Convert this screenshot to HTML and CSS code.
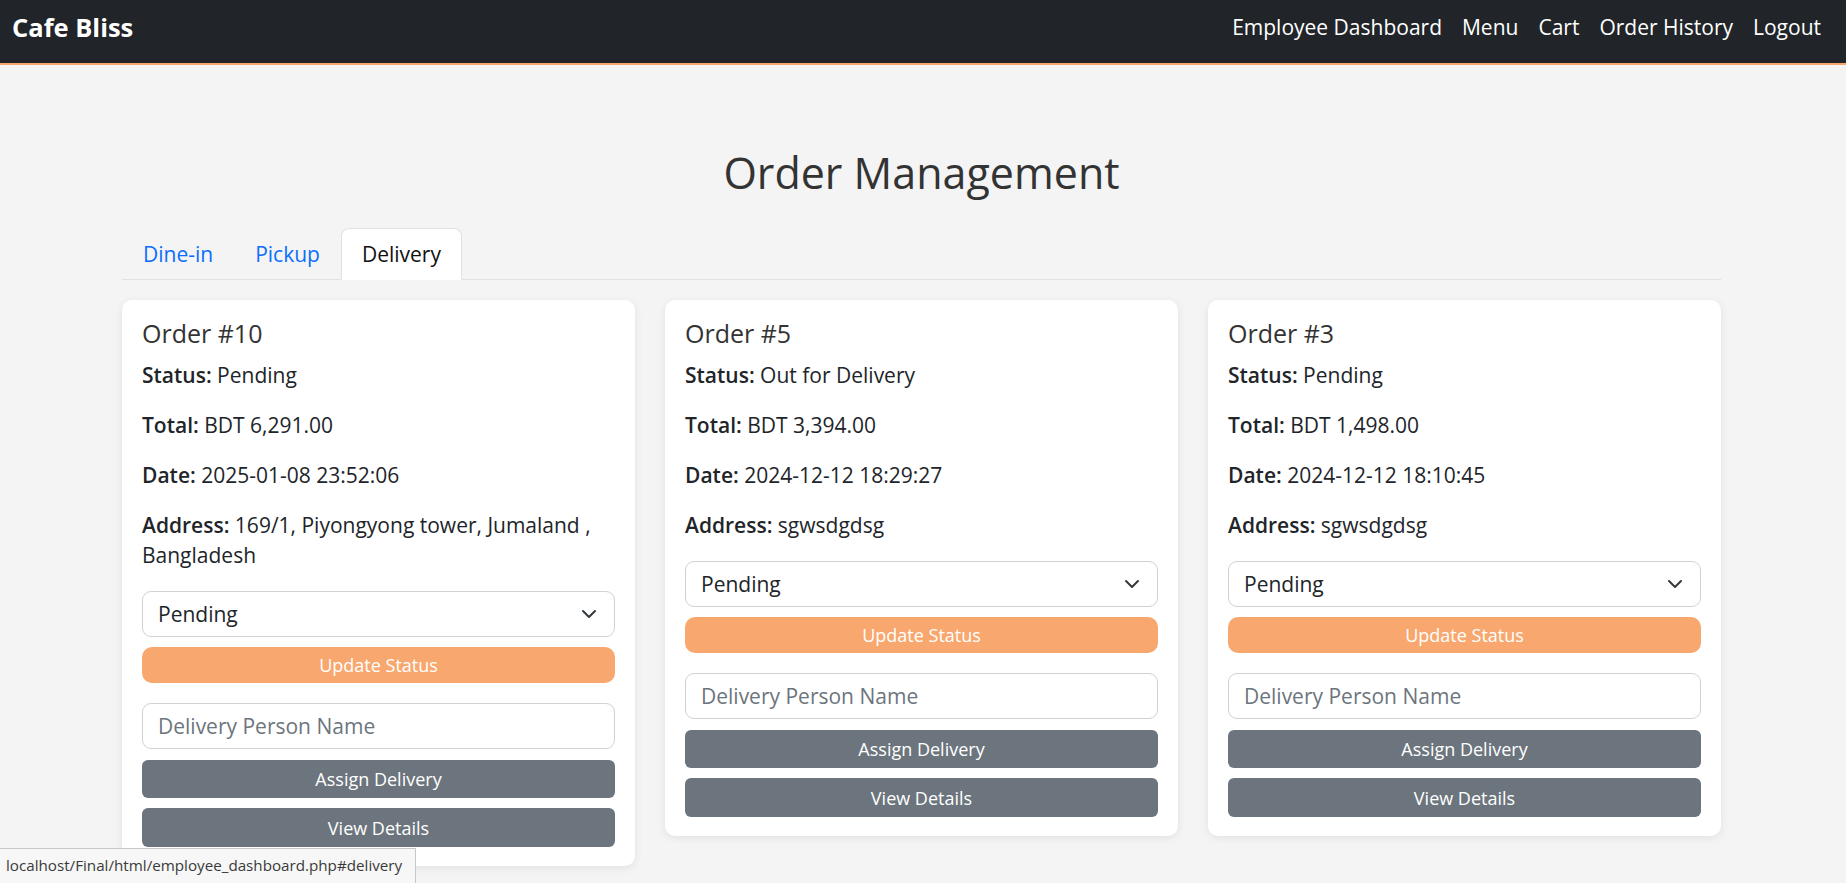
FILE: index.html
```html
<!DOCTYPE html>
<html lang="en">
<head>
<meta charset="utf-8">
<title>Cafe Bliss - Order Management</title>
<link rel="stylesheet" href="styles.css">
</head>
<body>
<nav class="navbar">
  <a class="brand" href="#">Cafe Bliss</a>
  <ul class="nav-links">
    <li><a href="#">Employee Dashboard</a></li>
    <li><a href="#">Menu</a></li>
    <li><a href="#">Cart</a></li>
    <li><a href="#">Order History</a></li>
    <li><a href="#">Logout</a></li>
  </ul>
</nav>

<main class="container">
  <h1 class="page-title">Order Management</h1>
  <ul class="tabs">
    <li><a class="tab" href="#">Dine-in</a></li>
    <li><a class="tab" href="#">Pickup</a></li>
    <li><a class="tab active" href="#">Delivery</a></li>
  </ul>

  <div class="cards">
    <div class="card">
      <h5 class="card-title">Order #10</h5>
      <p><strong>Status:</strong> Pending</p>
      <p><strong>Total:</strong> BDT 6,291.00</p>
      <p><strong>Date:</strong> 2025-01-08 23:52:06</p>
      <p><strong>Address:</strong> 169/1, Piyongyong tower, Jumaland , Bangladesh</p>
      <form class="status-form">
        <div class="select-wrap">
          <select class="select"><option>Pending</option></select>
          <svg class="chevron" viewBox="0 0 16 12" width="16" height="12"><path d="M2 3l6 6 6-6" fill="none" stroke="#343a40" stroke-width="2" stroke-linecap="round" stroke-linejoin="round"/></svg>
        </div>
        <button type="button" class="btn btn-orange">Update Status</button>
      </form>
      <form class="assign-form">
        <input class="input" type="text" placeholder="Delivery Person Name">
        <button type="button" class="btn btn-gray btn-assign">Assign Delivery</button>
        <button type="button" class="btn btn-gray btn-view">View Details</button>
      </form>
    </div>

    <div class="card">
      <h5 class="card-title">Order #5</h5>
      <p><strong>Status:</strong> Out for Delivery</p>
      <p><strong>Total:</strong> BDT 3,394.00</p>
      <p><strong>Date:</strong> 2024-12-12 18:29:27</p>
      <p><strong>Address:</strong> sgwsdgdsg</p>
      <form class="status-form">
        <div class="select-wrap">
          <select class="select"><option>Pending</option></select>
          <svg class="chevron" viewBox="0 0 16 12" width="16" height="12"><path d="M2 3l6 6 6-6" fill="none" stroke="#343a40" stroke-width="2" stroke-linecap="round" stroke-linejoin="round"/></svg>
        </div>
        <button type="button" class="btn btn-orange">Update Status</button>
      </form>
      <form class="assign-form">
        <input class="input" type="text" placeholder="Delivery Person Name">
        <button type="button" class="btn btn-gray btn-assign">Assign Delivery</button>
        <button type="button" class="btn btn-gray btn-view">View Details</button>
      </form>
    </div>

    <div class="card">
      <h5 class="card-title">Order #3</h5>
      <p><strong>Status:</strong> Pending</p>
      <p><strong>Total:</strong> BDT 1,498.00</p>
      <p><strong>Date:</strong> 2024-12-12 18:10:45</p>
      <p><strong>Address:</strong> sgwsdgdsg</p>
      <form class="status-form">
        <div class="select-wrap">
          <select class="select"><option>Pending</option></select>
          <svg class="chevron" viewBox="0 0 16 12" width="16" height="12"><path d="M2 3l6 6 6-6" fill="none" stroke="#343a40" stroke-width="2" stroke-linecap="round" stroke-linejoin="round"/></svg>
        </div>
        <button type="button" class="btn btn-orange">Update Status</button>
      </form>
      <form class="assign-form">
        <input class="input" type="text" placeholder="Delivery Person Name">
        <button type="button" class="btn btn-gray btn-assign">Assign Delivery</button>
        <button type="button" class="btn btn-gray btn-view">View Details</button>
      </form>
    </div>
  </div>
</main>

<div class="statusbar">localhost/Final/html/employee_dashboard.php#delivery</div>
</body>
</html>
```

FILE: styles.css
```css
* { box-sizing: border-box; }

html, body {
  margin: 0;
  padding: 0;
}

body {
  background: #f4f4f4;
  font-family: "Open Sans", "Liberation Sans", sans-serif;
  font-size: 21px;
  line-height: 30px;
  color: #212529;
  min-height: 883px;
}

a { text-decoration: none; }

/* Navbar */
.navbar {
  height: 65px;
  background: #212529;
  border-bottom: 2px solid #f8a66e;
  display: flex;
  align-items: center;
  justify-content: space-between;
  padding: 0 15px 9px 12px;
}

.brand {
  color: #fff;
  font-weight: 700;
  font-size: 25.5px;
  line-height: 36px;
}

.nav-links {
  list-style: none;
  margin: 0;
  padding: 0;
  display: flex;
}

.nav-links a {
  display: block;
  color: #fff;
  font-size: 21px;
  line-height: 30px;
  padding: 0 10px;
}

/* Page */
.container {
  width: 1599px;
  margin-left: 122px;
  padding-top: 82px;
}

.page-title {
  margin: 0 0 29px;
  text-align: center;
  font-size: 43px;
  line-height: 52px;
  font-weight: 500;
  color: #333;
}

/* Tabs */
.tabs {
  list-style: none;
  margin: 0 0 20px;
  padding: 0;
  display: flex;
  border-bottom: 1px solid #dee2e6;
}

.tab {
  display: block;
  padding: 10px 20px;
  line-height: 30px;
  color: #0d6efd;
  border: 1px solid transparent;
  border-top-left-radius: 8px;
  border-top-right-radius: 8px;
  margin-bottom: -1px;
}

.tab.active {
  color: #111;
  background: #fff;
  border-color: #dee2e6 #dee2e6 #fff;
}

/* Cards */
.cards {
  display: grid;
  grid-template-columns: repeat(3, 1fr);
  gap: 30px;
  align-items: start;
}

.card {
  background: #fff;
  border-radius: 10px;
  box-shadow: 0 2px 8px rgba(0, 0, 0, 0.08);
  padding: 20px 20px 19px;
}

.card-title {
  margin: 0 0 14px;
  font-size: 25px;
  line-height: 26px;
  font-weight: 500;
  color: #333;
}

.card p {
  margin: 0 0 20px;
}

.card p:last-of-type {
  margin-bottom: 21px;
}

.card strong {
  font-weight: 600;
}

.status-form,
.assign-form {
  margin: 0;
  display: flex;
  flex-direction: column;
}

.assign-form {
  margin-top: 20px;
}

.select-wrap {
  position: relative;
  margin-bottom: 10px;
}

.select {
  display: block;
  width: 100%;
  height: 46px;
  appearance: none;
  -webkit-appearance: none;
  background: #fff;
  border: 1px solid #cfd2d6;
  border-radius: 9px;
  padding: 0 40px 0 15px;
  font-family: inherit;
  font-size: 21px;
  color: #212529;
}

.chevron {
  position: absolute;
  right: 18px;
  top: 17px;
}

.btn {
  display: block;
  width: 100%;
  border: 0;
  color: #fff;
  font-family: inherit;
  font-size: 18px;
  font-weight: 500;
  cursor: pointer;
  padding: 0;
}

.btn-orange {
  background: #f8a86f;
  height: 36px;
  border-radius: 10px;
}

.btn-gray {
  background: #6c757d;
  border-radius: 6px;
}

.btn-assign {
  height: 38px;
  margin-bottom: 10px;
}

.btn-view {
  height: 39px;
}

.input {
  display: block;
  width: 100%;
  height: 46px;
  border: 1px solid #cfd2d6;
  border-radius: 9px;
  padding: 0 15px;
  font-family: inherit;
  font-size: 21px;
  color: #212529;
  background: #fff;
  margin-bottom: 11px;
}

.input::placeholder {
  color: #6c757d;
}

/* Browser link status overlay */
.statusbar {
  position: fixed;
  left: 0;
  bottom: 0;
  width: 416px;
  height: 35px;
  background: #f7f7f7;
  border-top: 1px solid #c8c8c8;
  border-right: 1px solid #c8c8c8;
  font-family: "Open Sans", "Liberation Sans", sans-serif;
  font-size: 15.2px;
  line-height: 33px;
  color: #3a3a3a;
  padding-left: 6px;
  white-space: nowrap;
}
```
